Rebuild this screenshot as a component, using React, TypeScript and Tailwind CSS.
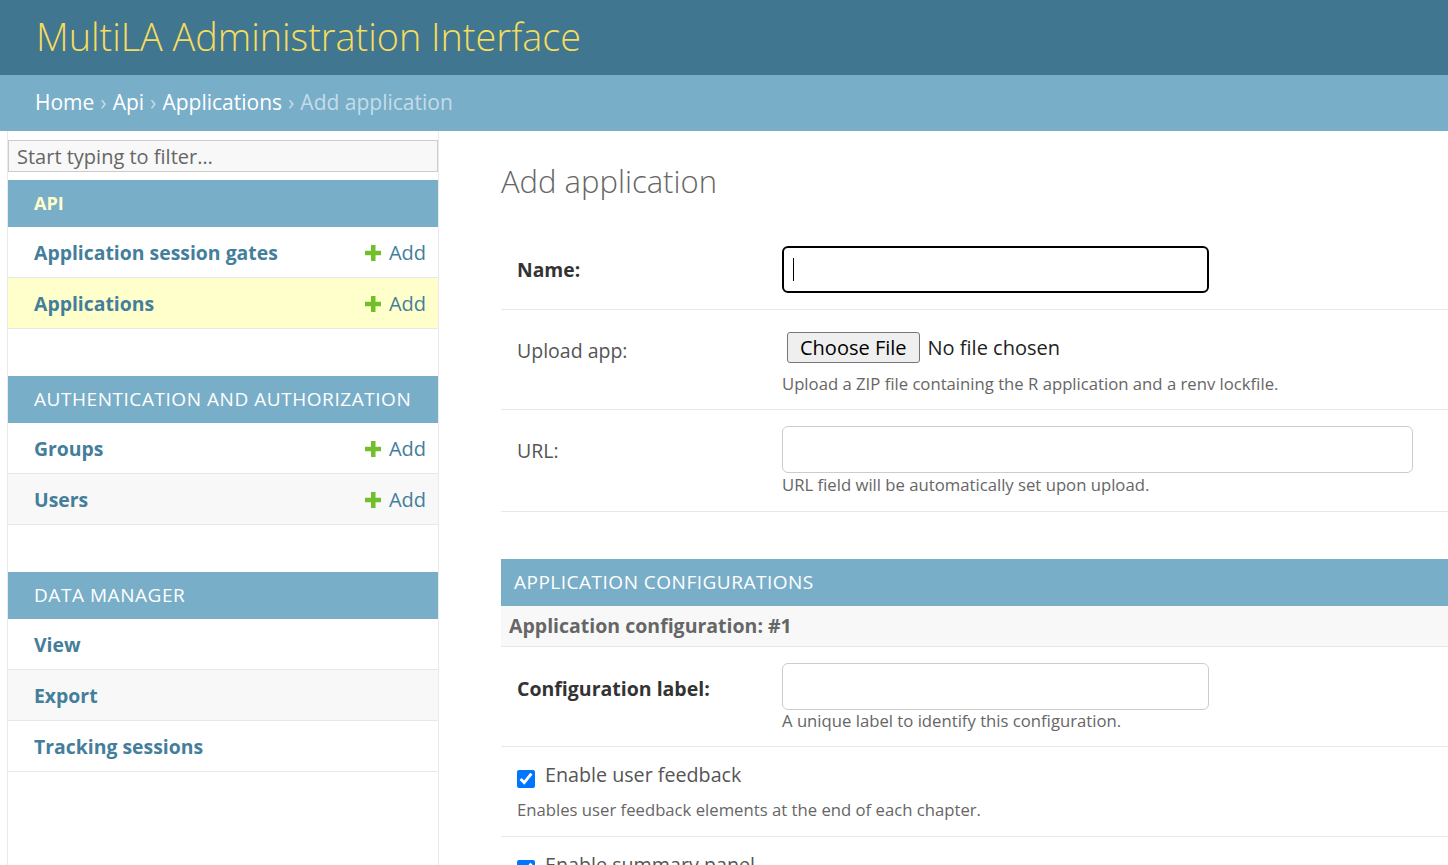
import React from "react";

const font = { fontFamily: '"Open Sans", "Noto Sans", sans-serif' };

function Plus() {
  return (
    <svg width="16" height="16" viewBox="0 0 16 16" className="shrink-0">
      <rect x="6" y="0" width="4.5" height="16" fill="#70bf2b" />
      <rect x="0" y="5.75" width="16" height="4.5" fill="#70bf2b" />
    </svg>
  );
}

function Row({ name, add, bg }: { name: string; add?: boolean; bg: string }) {
  return (
    <div className={`flex h-[51px] items-center justify-between border-b border-[#e8e8e8] pl-[26px] pr-[12px] pt-[1px] ${bg}`}>
      <span className="text-[19.4px] font-bold text-[#447e9b]">{name}</span>
      {add && (
        <span className="flex items-center gap-[8px] text-[20px] text-[#447e9b]">
          <Plus />
          Add
        </span>
      )}
    </div>
  );
}

function Caption({ text, current }: { text: string; current?: boolean }) {
  return (
    <div className="flex h-[47px] items-center bg-[#79aec8] pl-[26px]">
      <span
        className={`uppercase ${current ? "text-[18px] font-bold text-[#ffffcc]" : "text-[19px] tracking-[0.55px] text-white"}`}
      >
        {text}
      </span>
    </div>
  );
}

export default function App() {
  return (
    <div className="min-h-screen bg-white" style={font}>
      <header className="flex h-[75px] items-center bg-[#417690] px-[36px]">
        <h1 className="text-[37.8px] font-light text-[#f5dd5d]">MultiLA Administration Interface</h1>
      </header>
      <nav className="flex h-[56px] items-center bg-[#79aec8] px-[35px] text-[21px] text-white">
        <span>Home</span>
        <span className="mx-[6px] text-[#c4dce8]">›</span>
        <span>Api</span>
        <span className="mx-[6px] text-[#c4dce8]">›</span>
        <span>Applications</span>
        <span className="mx-[6px] text-[#c4dce8]">›</span>
        <span className="text-[#c4dce8]">Add application</span>
      </nav>
      <div className="flex">
        <aside className="ml-[7px] min-h-[734px] w-[432px] shrink-0 border-x border-[#eaeaea] pt-[9px]">
          <input
            placeholder="Start typing to filter…"
            className="h-[32px] w-full border border-[#cccccc] bg-[#f8f8f8] px-[8px] text-[20px] text-[#333] placeholder:text-[#666]"
          />
          <div className="mt-[8px]">
            <Caption text="API" current />
            <Row name="Application session gates" add bg="bg-white" />
            <Row name="Applications" add bg="bg-[#ffffcc]" />
          </div>
          <div className="mt-[47px]">
            <Caption text="Authentication and Authorization" />
            <Row name="Groups" add bg="bg-white" />
            <Row name="Users" add bg="bg-[#f8f8f8]" />
          </div>
          <div className="mt-[47px]">
            <Caption text="Data Manager" />
            <Row name="View" bg="bg-white" />
            <Row name="Export" bg="bg-[#f8f8f8]" />
            <Row name="Tracking sessions" bg="bg-white" />
          </div>
        </aside>
        <main className="min-w-0 flex-1 pl-[62px]">
          <h1 className="mt-[30px] text-[31px] font-light leading-[40px] text-[#666]">Add application</h1>
          <div className="mt-[29px]">
            {/* Name */}
            <div className="flex border-b border-[#e8e8e8] px-[16px] py-[16px]">
              <label className="flex h-[47px] w-[265px] shrink-0 items-center pt-[2px] text-[19.3px] font-bold text-[#333]">Name:</label>
              <div className="relative">
                <input className="h-[47px] w-[427px] rounded-[6px] border-2 border-black bg-white outline-none" />
                <span className="absolute left-[11px] top-[12px] h-[23px] w-[1px] bg-black" />
              </div>
            </div>
            {/* Upload */}
            <div className="flex border-b border-[#e8e8e8] px-[16px] pb-[14px] pt-[22px]">
              <label className="flex h-[31px] w-[265px] shrink-0 items-center pt-[6px] text-[19.5px] text-[#555]">Upload app:</label>
              <div className="pl-[5px]">
                <div className="flex items-center gap-[8px]">
                  <span className="flex h-[31px] items-center rounded-[3px] border border-[#767676] bg-[#efefef] px-[12px] text-[20px] text-black">Choose File</span>
                  <span className="text-[20px] text-[#222]">No file chosen</span>
                </div>
                <p className="-ml-[5px] mt-[10px] text-[16.7px] leading-[22px] text-[#666]">Upload a ZIP file containing the R application and a renv lockfile.</p>
              </div>
            </div>
            {/* URL */}
            <div className="flex border-b border-[#e8e8e8] px-[16px] pb-[15px] pt-[16px]">
              <label className="flex h-[47px] w-[265px] shrink-0 items-center pt-[2px] text-[19.5px] text-[#555]">URL:</label>
              <div>
                <input className="h-[47px] w-[631px] rounded-[6px] border border-[#cccccc] bg-white outline-none" />
                <p className="mt-[1px] text-[16.7px] leading-[22px] text-[#666]">URL field will be automatically set upon upload.</p>
              </div>
            </div>
          </div>
          {/* Inline */}
          <div className="mt-[47px]">
            <div className="flex h-[47px] items-center bg-[#79aec8] pl-[13px]">
              <span className="text-[19px] uppercase tracking-[0.5px] text-white">Application configurations</span>
            </div>
            <div className="flex h-[41px] items-center border-b border-[#e8e8e8] bg-[#f8f8f8] pl-[8px]">
              <span className="text-[19.5px] font-bold text-[#666]">Application configuration: #1</span>
            </div>
            <div className="flex border-b border-[#e8e8e8] px-[16px] pb-[14px] pt-[16px]">
              <label className="flex h-[47px] w-[265px] shrink-0 items-center pt-[4px] text-[19.5px] font-bold text-[#333]">Configuration label:</label>
              <div>
                <input className="h-[47px] w-[427px] rounded-[6px] border border-[#cccccc] bg-white outline-none" />
                <p className="text-[16.7px] leading-[22px] text-[#666]">A unique label to identify this configuration.</p>
              </div>
            </div>
            <div className="border-b border-[#e8e8e8] px-[16px] pb-[15px] pt-[13px]">
              <div className="flex items-start gap-[10px]">
                <input type="checkbox" defaultChecked className="mt-[10px] h-[18px] w-[18px] accent-[#0075ff]" />
                <span className="text-[19.7px] text-[#555]">Enable user feedback</span>
              </div>
              <p className="mt-[9px] text-[16.7px] leading-[22px] text-[#666]">Enables user feedback elements at the end of each chapter.</p>
            </div>
            <div className="border-b border-[#e8e8e8] px-[16px] pb-[15px] pt-[13px]">
              <div className="flex items-start gap-[10px]">
                <input type="checkbox" defaultChecked className="mt-[10px] h-[18px] w-[18px] accent-[#0075ff]" />
                <span className="text-[19.7px] text-[#555]">Enable summary panel</span>
              </div>
              <p className="mt-[9px] text-[16.7px] leading-[22px] text-[#666]">Enables the summary panel.</p>
            </div>
          </div>
        </main>
      </div>
    </div>
  );
}
